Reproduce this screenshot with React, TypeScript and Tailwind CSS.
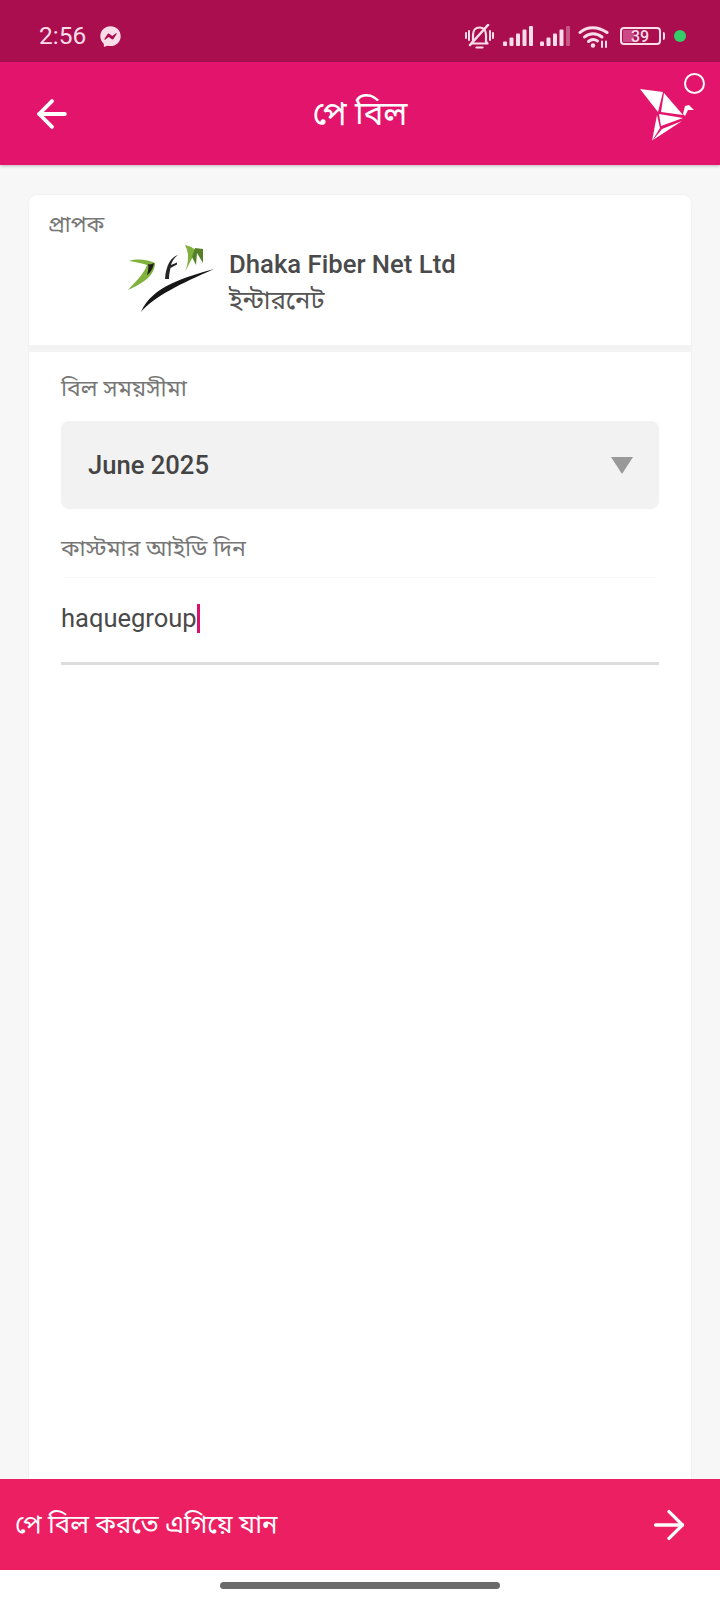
import { ArrowLeft, ArrowRight } from "lucide-react";
import { FaFacebookMessenger } from "react-icons/fa";

const roboto = "font-['Roboto','Noto_Sans_Bengali','Noto_Sans',sans-serif]";

const MutedBell = () => (
  <svg width="29" height="25" viewBox="0 0 29 25" fill="none" stroke="#fbdce9" strokeWidth="2.2" strokeLinecap="round" strokeLinejoin="round">
    <path d="M8 17.500V11C8 6.500 10.500 3.500 14.500 3.500C18.500 3.500 21 6.500 21 11V17.500L22.500 19.500H6.500Z" />
    <path d="M5 21L23 1" strokeWidth="2.6" />
    <path d="M11.500 23.500H17.500" />
    <path d="M1 9V14M4 7V16M25 7V16M28 9V14" strokeWidth="2" />
  </svg>
);

const SignalBars = ({ faded }: { faded?: boolean }) => (
  <svg width="30" height="20" viewBox="0 0 30 20" fill="#fbdce9">
    <rect x="0" y="15.500" width="4" height="4.500" rx="1" />
    <rect x="6.500" y="11.500" width="4" height="8.500" rx="1" />
    <rect x="13" y="7.500" width="4" height="12.500" rx="1" />
    <rect x="19.500" y="3.500" width="4" height="16.500" rx="1" />
    <rect x="26" y="0" width="4" height="20" rx="1" opacity={faded ? 0.35 : 1} />
  </svg>
);

const WifiIcon = () => (
  <svg width="31" height="23" viewBox="0 0 31 23" fill="none" stroke="#fbdce9" strokeWidth="3" strokeLinecap="round">
    <path d="M2 7.500C9 1 20 1 29 7.500" />
    <path d="M6.500 12C11.500 7.500 18.500 7.500 24 12" />
    <path d="M10.500 16.500C13.500 14 16.500 14 19.500 16" />
    <circle cx="15" cy="20.500" r="2.200" fill="#fbdce9" stroke="none" />
    <path d="M24 16.500v5.500M28 16.500v5.500" strokeWidth="2" />
  </svg>
);

const Battery = () => (
  <div className="ml-[11px] flex items-center gap-[2px]">
    <div className="relative flex h-[18px] w-[41px] items-center justify-center rounded-[4px] border-2 border-[#fbdce9] text-[16px] font-medium leading-none text-[#fbdce9]">
      <div className="absolute bottom-[1px] left-[1px] top-[1px] w-[11px] rounded-[1px] bg-[#c94a85]" />
      <span className="relative top-[1px]">39</span>
    </div>
    <div className="h-[8px] w-[2.500px] rounded-r bg-[#fbdce9]" />
  </div>
);

const OrigamiBird = () => (
  <svg width="54" height="54" viewBox="0 0 54 54" fill="#fff">
    <path d="M0 1L23 4L18 24Z" />
    <path d="M24 5L43 27L21 24Z" />
    <path d="M19 26L43 30L21 38Z" />
    <path d="M17 27L20 40L12 53Z" />
    <path d="M22 41L42 33L13 52Z" />
    <path d="M43 26L45 18L49 17L54 22L48 22L45 28Z" />
  </svg>
);

const DfnLogo = () => (
  <svg width="100" height="80" viewBox="0 0 100 80" className="shrink-0">
    <path d="M9 21C18 18 28 20 35 23C35 35 24 43 8 50C15 42 24 34 27 25C22 23 15 22 9 21Z" fill="#7fb13c" />
    <path d="M28 24C30 25 32 24 34 23C33 29 30 33 27 35C28 31 29 27 28 24Z" fill="#1d1d1d" />
    <path d="M58 15C51 17 46 25 45 39L49 39C49 34 50 31 50.500 28L57 24.500L57 22.500L51 25C52 21 54 18 58 15Z" fill="#262626" />
    <path d="M65 5C70 6 74 8 76 11C72 18 68 26 65 32C68 24 70 14 65 5Z" fill="#7fb13c" />
    <path d="M75 8L83 9L83 23L77 13L76 25L72 17Z" fill="#557f28" />
    <path d="M94 29C66 37 32 46 21 72C33 57 62 43 94 29Z" fill="#161616" />
  </svg>
);

const App = () => {
  return (
    <div className={`flex h-[1600px] w-[720px] flex-col overflow-hidden bg-white ${roboto}`}>
      <div className="flex h-[62px] shrink-0 items-center justify-between bg-[#aa0e4f] pl-[39px] pr-[34px] pt-[10px] text-[#fbdce9]">
        <div className="flex items-center gap-[14px]">
          <span className="text-[24.500px] leading-none">2:56</span>
          <FaFacebookMessenger className="text-[21px]" />
        </div>
        <div className="flex items-center">
          <MutedBell />
          <div className="ml-[9px]">
            <SignalBars />
          </div>
          <div className="ml-[7px]">
            <SignalBars faded />
          </div>
          <div className="ml-[8px]">
            <WifiIcon />
          </div>
          <Battery />
          <div className="ml-[9px] h-[12px] w-[12px] rounded-full bg-[#33cc66]" />
        </div>
      </div>

      <header className="relative z-10 flex h-[103px] shrink-0 items-center justify-between bg-[#e3146c] pl-[30px] pr-[26px] shadow-[0_1px_3px_rgba(0,0,0,0.25)]">
        <ArrowLeft size={44} strokeWidth={2.100} className="text-white" />
        <h1 className="absolute left-0 right-0 text-center text-[33px] font-normal text-white">পে বিল</h1>
        <div className="relative mt-[3px]">
          <OrigamiBird />
          <div className="absolute -right-[11px] -top-[15px] h-[21px] w-[21px] rounded-full border-[2.500px] border-white" />
        </div>
      </header>

      <main className="flex min-h-0 flex-1 flex-col bg-[#f7f7f7] px-[29px] pt-[30px]">
        <section className="flex flex-1 flex-col rounded-t-[8px] bg-white shadow-[0_0_2px_rgba(0,0,0,0.08)]">
          <div className="h-[157px] shrink-0 border-b-[7px] border-[#f3f3f3] px-[19px] pt-[14px]">
            <p className="text-[22px] leading-[31px] text-[#777]">প্রাপক</p>
            <div className="flex items-start pl-[72px]">
              <DfnLogo />
              <div className="ml-[9px] pt-[6px]">
                <p className="text-[25.700px] font-medium leading-[36px] text-[#4a4a4a]">Dhaka Fiber Net Ltd</p>
                <p className="text-[25.500px] leading-[37px] text-[#555]">ইন্টারনেট</p>
              </div>
            </div>
          </div>

          <div className="flex flex-col px-[32px]">
            <label className="mt-[21px] text-[23px] leading-[32px] text-[#777]">বিল সময়সীমা</label>
            <div className="mt-[16px] flex h-[88px] items-center justify-between rounded-[8px] bg-[#f2f2f2] pl-[27px] pr-[26px]">
              <span className="text-[25.600px] font-medium text-[#444]">June 2025</span>
              <svg width="22" height="17" viewBox="0 0 22 17" fill="#999">
                <path d="M0 0H22L11 17Z" />
              </svg>
            </div>
            <label className="mt-[24px] text-[23px] leading-[32px] text-[#777]">কাস্টমার আইডি দিন</label>
            <div className="mt-[12px] flex h-[88px] items-center rounded-t-[4px] border-b-[3px] border-t border-b-[#dcdcdc] border-t-[#f8f8f8] pb-[3px]">
              <span className="text-[25.500px] leading-none text-[#4a4a4a]">haquegroup</span>
              <span className="h-[29px] w-[3px] bg-[#d8106e]" />
            </div>
          </div>
        </section>
      </main>

      <button className="flex h-[91px] shrink-0 items-center justify-between bg-[#ec1f63] pl-[15px] pr-[28px] text-white">
        <span className="text-[25.700px]">পে বিল করতে এগিয়ে যান</span>
        <ArrowRight size={46} strokeWidth={1.700} />
      </button>

      <div className="flex h-[30px] shrink-0 items-center justify-center bg-white">
        <div className="h-[7px] w-[280px] rounded-full bg-[#6b6b6b]" />
      </div>
    </div>
  );
};

export default App;
